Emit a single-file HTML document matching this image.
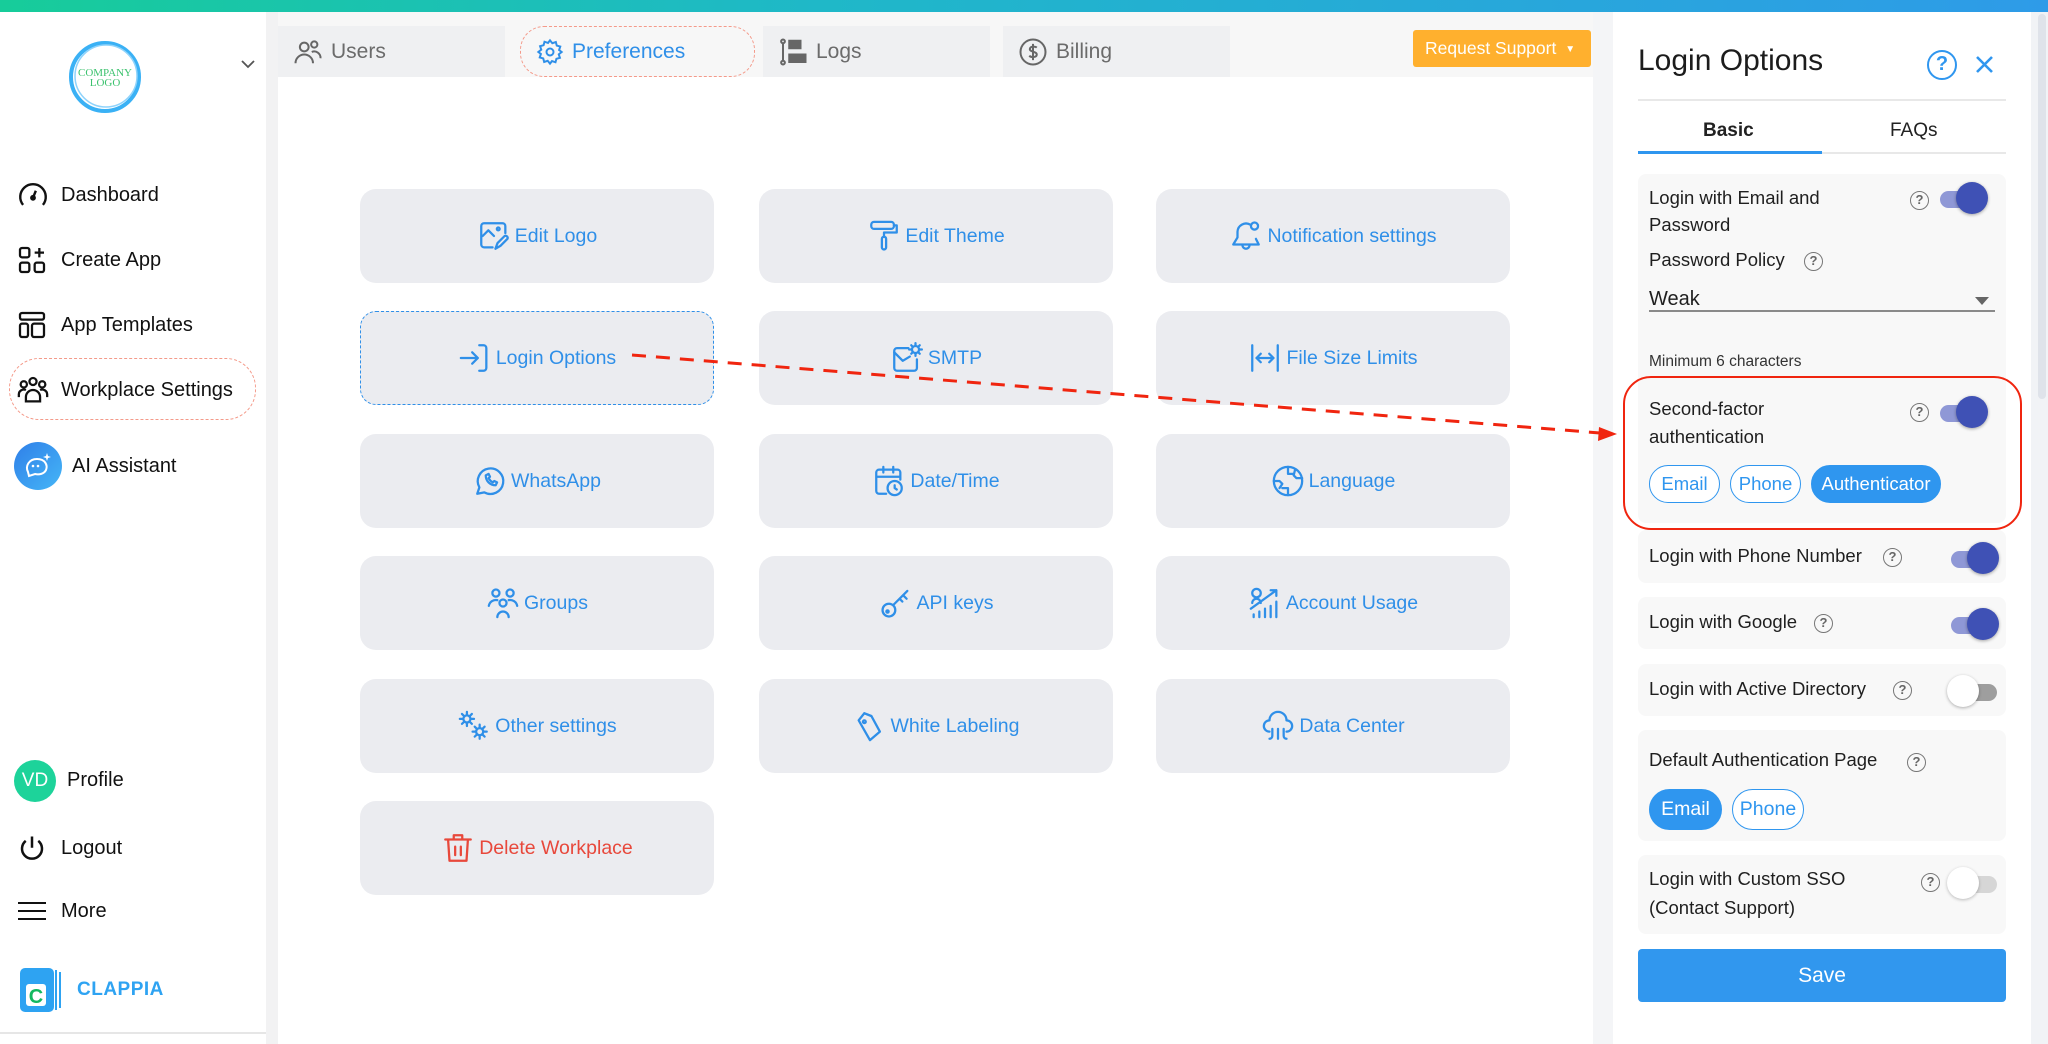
<!DOCTYPE html>
<html><head><meta charset="utf-8"><style>
*{box-sizing:border-box;margin:0;padding:0}
body{width:2048px;height:1044px;overflow:hidden;position:relative;font-family:"Liberation Sans",sans-serif;background:#f7f7f7;color:#1b1b1b}
.a{position:absolute}
.topbar{left:0;top:0;width:2048px;height:12px;background:linear-gradient(90deg,#17cc9a,#1fb8c8 40%,#2e9be8)}
.side{left:0;top:12px;width:266px;height:1032px;background:#fff}
.gap{left:266px;top:12px;width:12px;height:1032px;background:#f2f2f3}
.nav{position:absolute;left:0;font-size:20px;color:#111;display:flex;align-items:center;height:40px}
.nav svg{position:absolute;left:16px}
.nav span{position:absolute;left:61px;white-space:nowrap}
.tab{position:absolute;top:26px;height:51px;background:#eff0f2;font-size:21px;color:#6b6b6b;display:flex;align-items:center}
.tab svg{margin-left:15px;margin-right:8px}
.main{left:278px;top:77px;width:1315px;height:967px;background:#fff}
.card{position:absolute;width:354px;height:94px;background:#ebecf0;border-radius:16px;display:flex;align-items:center;justify-content:center;color:#2f8fe8;font-size:19.5px;gap:4px}
.card svg{width:34px;height:34px;fill:none;stroke:#2f8fe8;stroke-width:1.6;stroke-linecap:round;stroke-linejoin:round}
.panel{left:1613px;top:12px;width:418px;height:1032px;background:#fff}
.sec{position:absolute;left:1638px;width:368px;background:#f8f8f8;border-radius:8px}
.t{position:absolute;font-size:18.5px;color:#1f1f1f;white-space:nowrap}
.q{position:absolute;width:19px;height:19px;border:1.6px solid #777;border-radius:50%;font-size:13px;color:#666;text-align:center;line-height:16px;font-weight:bold}
.tg{position:absolute;width:52px;height:34px}
.tg .tr{position:absolute;left:4px;top:9px;width:46px;height:17px;border-radius:9px;background:#8f98d6}
.tg .kn{position:absolute;left:20px;top:0;width:32px;height:32px;border-radius:50%;background:#3f51b5;box-shadow:0 1px 3px rgba(0,0,0,.35)}
.tg.off .tr{background:#9e9e9e}
.tg.off .kn{left:0;background:#fff}
.tg.off2 .tr{background:#d6d6d6}
.tg.off2 .kn{left:0;background:#fff}
.chip{position:absolute;height:38px;border:1.5px solid #2f96ef;border-radius:19px;color:#2f96ef;font-size:18.5px;display:flex;align-items:center;justify-content:center;background:#fff}
.chip.f{background:#2f96ef;color:#fff}
</style></head><body>
<div class="a topbar"></div>
<div class="a side"></div>
<div class="a gap"></div>

<svg class="a" style="left:66px;top:38px" width="78" height="78" viewBox="0 0 78 78">
<circle cx="39" cy="39" r="34" fill="none" stroke="#3ab1f5" stroke-width="4"/>
<circle cx="40" cy="38" r="31" fill="none" stroke="#8fd3fb" stroke-width="1.5"/>
<text x="39" y="38" font-family="Liberation Serif" font-size="11" fill="#3cc26e" text-anchor="middle">COMPANY</text>
<text x="39" y="48" font-family="Liberation Serif" font-size="11" fill="#3cc26e" text-anchor="middle">LOGO</text>
</svg>
<svg class="a" style="left:240px;top:59px" width="16" height="10" viewBox="0 0 16 10"><path d="M2 2l6 6 6-6" fill="none" stroke="#555" stroke-width="1.8"/></svg>

<div class="nav" style="top:175px"><svg width="34" height="34" viewBox="0 0 24 24" fill="none" stroke="#111" stroke-width="1.7"><path d="M5 19A9 9 0 1 1 19 19"/><path d="M12 14l2-5"/><circle cx="12" cy="14" r="1.2" fill="#111"/></svg><span>Dashboard</span></div>
<div class="nav" style="top:240px"><svg width="32" height="32" viewBox="0 0 24 24" fill="none" stroke="#111" stroke-width="1.7"><rect x="3" y="3" width="7" height="7" rx="1.5"/><rect x="3" y="14" width="7" height="7" rx="1.5"/><rect x="14" y="14" width="7" height="7" rx="1.5"/><path d="M17.5 3v7M14 6.5h7"/></svg><span>Create App</span></div>
<div class="nav" style="top:305px"><svg width="32" height="32" viewBox="0 0 24 24" fill="none" stroke="#111" stroke-width="1.7"><rect x="3" y="3" width="18" height="5" rx="1.5"/><rect x="3" y="11" width="6" height="10" rx="1.5"/><rect x="12" y="11" width="9" height="10" rx="1.5"/></svg><span>App Templates</span></div>
<div class="a" style="left:9px;top:358px;width:247px;height:62px;border:1.5px dashed #f49a8a;border-radius:30px"></div>
<div class="nav" style="top:370px"><svg width="34" height="34" viewBox="0 0 24 24" fill="none" stroke="#111" stroke-width="1.6"><circle cx="12" cy="6" r="2.5"/><circle cx="5.5" cy="8" r="2.2"/><circle cx="18.5" cy="8" r="2.2"/><path d="M7 20v-3a5 5 0 0 1 10 0v3zM2 17v-2a3.5 3.5 0 0 1 5-3M22 17v-2a3.5 3.5 0 0 0-5-3"/></svg><span>Workplace Settings</span></div>
<div class="nav" style="top:446px"><svg style="left:14px" width="48" height="48" viewBox="0 0 48 48"><defs><linearGradient id="g1" x1="0" y1="0" x2="1" y2="1"><stop offset="0" stop-color="#2f7fe8"/><stop offset="1" stop-color="#45b6f7"/></linearGradient></defs><circle cx="24" cy="24" r="24" fill="url(#g1)"/><path d="M14 30c-3-6 1-13 9-13s11 6 9 11c-2 4-7 5-11 4l-6 2z" fill="none" stroke="#fff" stroke-width="2"/><circle cx="19" cy="24" r="1.3" fill="#fff"/><circle cx="24" cy="24" r="1.3" fill="#fff"/><path d="M33 11l1 3 3 1-3 1-1 3-1-3-3-1 3-1z" fill="#fff"/></svg><span style="left:72px">AI Assistant</span></div>

<div class="a" style="left:14px;top:760px;width:42px;height:42px;border-radius:50%;background:#1dd39a;color:#fff;font-size:19px;text-align:center;line-height:42px">VD</div>
<div class="a" style="left:67px;top:769px;font-size:20px;color:#111">Profile</div>
<svg class="a" style="left:17px;top:834px" width="30" height="30" viewBox="0 0 24 24" fill="none" stroke="#111" stroke-width="2"><path d="M7 5.5a8 8 0 1 0 10 0M12 2v9"/></svg>
<div class="a" style="left:61px;top:837px;font-size:20px;color:#111">Logout</div>
<svg class="a" style="left:18px;top:900px" width="28" height="22" viewBox="0 0 28 22" stroke="#111" stroke-width="2"><path d="M0 3h28M0 11h28M0 19h28"/></svg>
<div class="a" style="left:61px;top:900px;font-size:20px;color:#111">More</div>
<svg class="a" style="left:20px;top:968px" width="44" height="44" viewBox="0 0 44 44"><rect x="0" y="0" width="34" height="44" rx="5" fill="#2ea3f2"/><rect x="35" y="2" width="2" height="40" fill="#2ea3f2"/><rect x="39" y="4" width="2" height="36" fill="#2ea3f2"/><rect x="6" y="16" width="20" height="22" rx="3" fill="#fff"/><text x="16" y="35" font-family="Liberation Sans" font-weight="bold" font-size="20" fill="#14b860" text-anchor="middle">C</text></svg>
<div class="a" style="left:77px;top:979px;font-size:19px;font-weight:bold;color:#2ea3f2;letter-spacing:.5px">CLAPPIA</div>
<div class="a" style="left:0;top:1032px;width:266px;height:2px;background:#e6e6e6"></div>

<div class="tab" style="left:278px;width:227px"><svg width="30" height="30" viewBox="0 0 24 24" fill="none" stroke="#666" stroke-width="1.6"><circle cx="9" cy="8" r="3.5"/><circle cx="17" cy="6" r="2.5"/><path d="M2 21a7 7 0 0 1 14 0M15 12a5 5 0 0 1 7 5"/></svg>Users</div>
<div class="tab" style="left:520px;width:235px;background:#f7f7f7;color:#2f8fe8;border:1.5px dashed #f49a8a;border-radius:24px"><svg width="28" height="28" viewBox="0 0 24 24" fill="none" stroke="#2f8fe8" stroke-width="1.7"><circle cx="12" cy="12" r="3"/><path d="M12 2l2 2.5 3-1 .8 3 3 .8-1 3L22 12l-2.5 2 1 3-3 .8-.8 3-3-1L12 22l-2-2.5-3 1-.8-3-3-.8 1-3L2 12l2.5-2-1-3 3-.8.8-3 3 1z"/></svg>Preferences</div>
<div class="tab" style="left:763px;width:227px"><svg width="30" height="30" viewBox="0 0 24 24" fill="none" stroke="#666" stroke-width="1.6"><circle cx="4" cy="3.5" r="1.5"/><circle cx="4" cy="20.5" r="1.5"/><path d="M4 5v14"/><rect x="9" y="3" width="9" height="6" fill="#666"/><rect x="9" y="14" width="13" height="6" fill="#666"/></svg>Logs</div>
<div class="tab" style="left:1003px;width:227px"><svg width="30" height="30" viewBox="0 0 24 24" fill="none" stroke="#666" stroke-width="1.6"><circle cx="12" cy="12" r="10"/><path d="M15 8.5c-1-1-5-1.5-5.5 1s5.5 2 5.5 4.5-4.5 2.5-6 1M12 5.5v13"/></svg>Billing</div>
<div class="a" style="left:1413px;top:30px;width:178px;height:37px;background:#ffb02e;border-radius:3px;color:#fff;font-size:17.5px;line-height:37px;padding-left:12px">Request Support <span style="font-size:10px;vertical-align:2px;margin-left:4px">▼</span></div>

<div class="a main"></div>

<div class="card" style="left:360px;top:189px"><svg viewBox="0 0 24 24"><path d="M11 20H5a2 2 0 0 1-2-2V5a2 2 0 0 1 2-2h13a2 2 0 0 1 2 2v5"/><path d="M4 12l4-4 4 4"/><circle cx="15" cy="7" r="1"/><path d="M13 21l1.5-4 5-5a1.5 1.5 0 0 1 2 2l-5 5z"/></svg>Edit Logo</div>
<div class="card" style="left:759px;top:189px"><svg viewBox="0 0 24 24"><rect x="3" y="2" width="16" height="5" rx="2"/><path d="M19 4.5h2v5h-9v3"/><rect x="10.5" y="12.5" width="3" height="9" rx="1.5"/></svg>Edit Theme</div>
<div class="card" style="left:1156px;top:189px"><svg viewBox="0 0 24 24"><path d="M15 4a6 6 0 0 0-9 5v4l-3 5h18l-2-4"/><circle cx="18" cy="5" r="2.5"/><path d="M9.5 18.5a2.5 2.5 0 0 0 5 0"/></svg>Notification settings</div>

<div class="card" style="left:360px;top:311px;border:1.5px dashed #2f8fe8;background:#ebecf0"><svg viewBox="0 0 24 24"><path d="M2 12h12M10 8l4 4-4 4M15 3h3a2 2 0 0 1 2 2v14a2 2 0 0 1-2 2h-3"/></svg>Login Options</div>
<div class="card" style="left:759px;top:311px"><svg viewBox="0 0 24 24"><path d="M13 5H5a2 2 0 0 0-2 2v12a2 2 0 0 0 2 2h12a2 2 0 0 0 2-2v-6"/><path d="M3 8l6 6 5-3"/><circle cx="18" cy="6" r="2.5"/><path d="M18 1.5v1.5M18 9v1.5M13.5 6H15M21 6h1.5M15 3l1 1M20 8l1 1M21 3l-1 1M16 8l-1 1"/></svg>SMTP</div>
<div class="card" style="left:1156px;top:311px"><svg viewBox="0 0 24 24"><path d="M3 3v18M21 3v18M6 12h12M9 9l-3 3 3 3M15 9l3 3-3 3"/></svg>File Size Limits</div>

<div class="card" style="left:360px;top:434px"><svg viewBox="0 0 24 24"><path d="M3 21l1.5-4.5A9 9 0 1 1 8 20z"/><path d="M9 8c0 4 3 7 7 7l1-2-2-1-1 1c-1-.5-2.5-2-3-3l1-1-1-2z"/></svg>WhatsApp</div>
<div class="card" style="left:759px;top:434px"><svg viewBox="0 0 24 24"><path d="M10 21H5a2 2 0 0 1-2-2V6a2 2 0 0 1 2-2h13a2 2 0 0 1 2 2v5M3 9h17M8 2v4M15 2v4"/><circle cx="16" cy="17" r="5"/><path d="M16 15v2l1.5 1"/></svg>Date/Time</div>
<div class="card" style="left:1156px;top:434px"><svg viewBox="0 0 24 24"><circle cx="12" cy="12" r="10"/><path d="M2 12h4l2 2-2 3M22 10h-4l-2-2 1-4M12 2v5h4M12 22v-5H8"/></svg>Language</div>

<div class="card" style="left:360px;top:556px"><svg viewBox="0 0 24 24"><circle cx="7" cy="5" r="2.5"/><circle cx="17" cy="5" r="2.5"/><circle cx="12" cy="12" r="2.5"/><path d="M2 14a5 5 0 0 1 6-4M22 14a5 5 0 0 0-6-4M8 22a4 4 0 0 1 8 0"/></svg>Groups</div>
<div class="card" style="left:759px;top:556px"><svg viewBox="0 0 24 24"><circle cx="7" cy="17" r="4.5"/><path d="M10 13.5L20 3.5M17 6.5l2.5 2.5M14.5 9l2 2"/><circle cx="6" cy="18" r=".8"/></svg>API keys</div>
<div class="card" style="left:1156px;top:556px"><svg viewBox="0 0 24 24"><circle cx="6" cy="5" r="3"/><path d="M3 12a3 3 0 0 1 6 0M2 16L20 3M16 3h4v4M4 22v-2M8 22v-4M12 22v-6M16 22v-8M20 22v-11"/></svg>Account Usage</div>

<div class="card" style="left:360px;top:679px"><svg viewBox="0 0 24 24"><circle cx="7" cy="7" r="2.5"/><path d="M7 2v2M7 10v2M2 7h2M10 7h2M3.5 3.5l1.4 1.4M9.1 9.1l1.4 1.4M10.5 3.5L9.1 4.9M4.9 9.1L3.5 10.5"/><circle cx="16" cy="16" r="2.5"/><path d="M16 11v2M16 19v2M11 16h2M19 16h2M12.5 12.5l1.4 1.4M18.1 18.1l1.4 1.4M19.5 12.5l-1.4 1.4M13.9 18.1l-1.4 1.4"/></svg>Other settings</div>
<div class="card" style="left:759px;top:679px"><svg viewBox="0 0 24 24"><path d="M4 8l4-5 5 2 6 11-7 6z"/><path d="M8 3l5 2"/><circle cx="8" cy="9" r="1"/></svg>White Labeling</div>
<div class="card" style="left:1156px;top:679px"><svg viewBox="0 0 24 24"><path d="M6 16a4 4 0 0 1 0-8 6 6 0 0 1 12 0 4 4 0 0 1 0 8"/><path d="M8 14v5a2 2 0 0 1-2 2M12 14v7M16 14v5a2 2 0 0 0 2 2"/></svg>Data Center</div>

<div class="card" style="left:360px;top:801px;color:#e8483b"><svg viewBox="0 0 24 24" style="stroke:#e8483b"><path d="M3 6h18M9 6V3h6v3M5 6l1 15h12l1-15M10 11v6M14 11v6"/></svg>Delete Workplace</div>

<div class="a" style="left:1593px;top:12px;width:20px;height:1032px;background:#f4f5f7"></div>
<div class="a panel"></div>
<div class="a" style="left:2031px;top:12px;width:17px;height:1032px;background:#f1f3f6"></div>
<div class="a" style="left:2038px;top:14px;width:8px;height:385px;border-radius:4px;background:#dfe3ea"></div>
<div class="a" style="left:1638px;top:44px;font-size:30px;color:#1c1c1c">Login Options</div>
<div class="a" style="left:1927px;top:50px;width:30px;height:30px;border:2.5px solid #2f96ef;border-radius:50%;color:#2f96ef;font-size:20px;font-weight:bold;text-align:center;line-height:25px">?</div>
<svg class="a" style="left:1975px;top:55px" width="19" height="19" viewBox="0 0 19 19" stroke="#2f96ef" stroke-width="2.6"><path d="M2 2l15 15M17 2L2 17"/></svg>
<div class="a" style="left:1638px;top:99px;width:368px;height:2px;background:#e8e8e8"></div>
<div class="a" style="left:1703px;top:120px;font-size:19px;font-weight:bold;color:#222">Basic</div>
<div class="a" style="left:1890px;top:120px;font-size:19px;color:#222">FAQs</div>
<div class="a" style="left:1638px;top:152px;width:368px;height:2px;background:#e8e8e8"></div>
<div class="a" style="left:1638px;top:151px;width:184px;height:3px;background:#2f96ef"></div>

<div class="sec" style="top:174px;height:349px"></div>
<div class="t" style="left:1649px;top:187px">Login with Email and</div>
<div class="t" style="left:1649px;top:214px">Password</div>
<div class="q" style="left:1910px;top:191px">?</div>
<div class="tg" style="left:1936px;top:182px"><div class="tr"></div><div class="kn"></div></div>
<div class="t" style="left:1649px;top:249px">Password Policy</div>
<div class="q" style="left:1804px;top:252px">?</div>
<div class="t" style="left:1649px;top:288px;font-size:20px">Weak</div>
<svg class="a" style="left:1975px;top:297px" width="14" height="8"><path d="M0 0h14L7 8z" fill="#666"/></svg>
<div class="a" style="left:1649px;top:310px;width:346px;height:1.5px;background:#8a8a8a"></div>
<div class="t" style="left:1649px;top:353px;font-size:15.5px;color:#333">Minimum 6 characters</div>
<div class="a" style="left:1623px;top:376px;width:399px;height:154px;border:2.5px solid #f0250f;border-radius:28px"></div>
<div class="t" style="left:1649px;top:398px">Second-factor</div>
<div class="t" style="left:1649px;top:426px">authentication</div>
<div class="q" style="left:1910px;top:403px">?</div>
<div class="tg" style="left:1936px;top:396px"><div class="tr"></div><div class="kn"></div></div>
<div class="chip" style="left:1649px;top:465px;width:71px">Email</div>
<div class="chip" style="left:1730px;top:465px;width:71px">Phone</div>
<div class="chip f" style="left:1811px;top:465px;width:130px">Authenticator</div>

<div class="sec" style="top:530px;height:53px"></div>
<div class="t" style="left:1649px;top:545px">Login with Phone Number</div>
<div class="q" style="left:1883px;top:548px">?</div>
<div class="tg" style="left:1947px;top:542px"><div class="tr"></div><div class="kn"></div></div>

<div class="sec" style="top:597px;height:52px"></div>
<div class="t" style="left:1649px;top:611px">Login with Google</div>
<div class="q" style="left:1814px;top:614px">?</div>
<div class="tg" style="left:1947px;top:608px"><div class="tr"></div><div class="kn"></div></div>

<div class="sec" style="top:664px;height:52px"></div>
<div class="t" style="left:1649px;top:678px">Login with Active Directory</div>
<div class="q" style="left:1893px;top:681px">?</div>
<div class="tg off" style="left:1947px;top:675px"><div class="tr"></div><div class="kn" style="box-shadow:0 1px 3px rgba(0,0,0,.3)"></div></div>

<div class="sec" style="top:730px;height:111px"></div>
<div class="t" style="left:1649px;top:749px">Default Authentication Page</div>
<div class="q" style="left:1907px;top:753px">?</div>
<div class="chip f" style="left:1649px;top:789px;width:73px;height:41px;border-radius:21px;font-size:19.5px">Email</div>
<div class="chip" style="left:1732px;top:789px;width:72px;height:41px;border-radius:21px;font-size:19.5px">Phone</div>

<div class="sec" style="top:855px;height:79px"></div>
<div class="t" style="left:1649px;top:868px">Login with Custom SSO</div>
<div class="t" style="left:1649px;top:897px">(Contact Support)</div>
<div class="q" style="left:1921px;top:873px">?</div>
<div class="tg off2" style="left:1947px;top:867px"><div class="tr"></div><div class="kn" style="box-shadow:0 1px 3px rgba(0,0,0,.25)"></div></div>

<div class="a" style="left:1638px;top:949px;width:368px;height:53px;background:#3197ee;border-radius:4px;color:#fff;font-size:21px;text-align:center;line-height:53px">Save</div>

<svg class="a" style="left:0;top:0" width="2048" height="1044"><line x1="632" y1="355" x2="1600" y2="433" stroke="#f0250f" stroke-width="3" stroke-dasharray="14 10"/><path d="M1617 434l-19 7 1-14z" fill="#f0250f"/></svg>
</body></html>
